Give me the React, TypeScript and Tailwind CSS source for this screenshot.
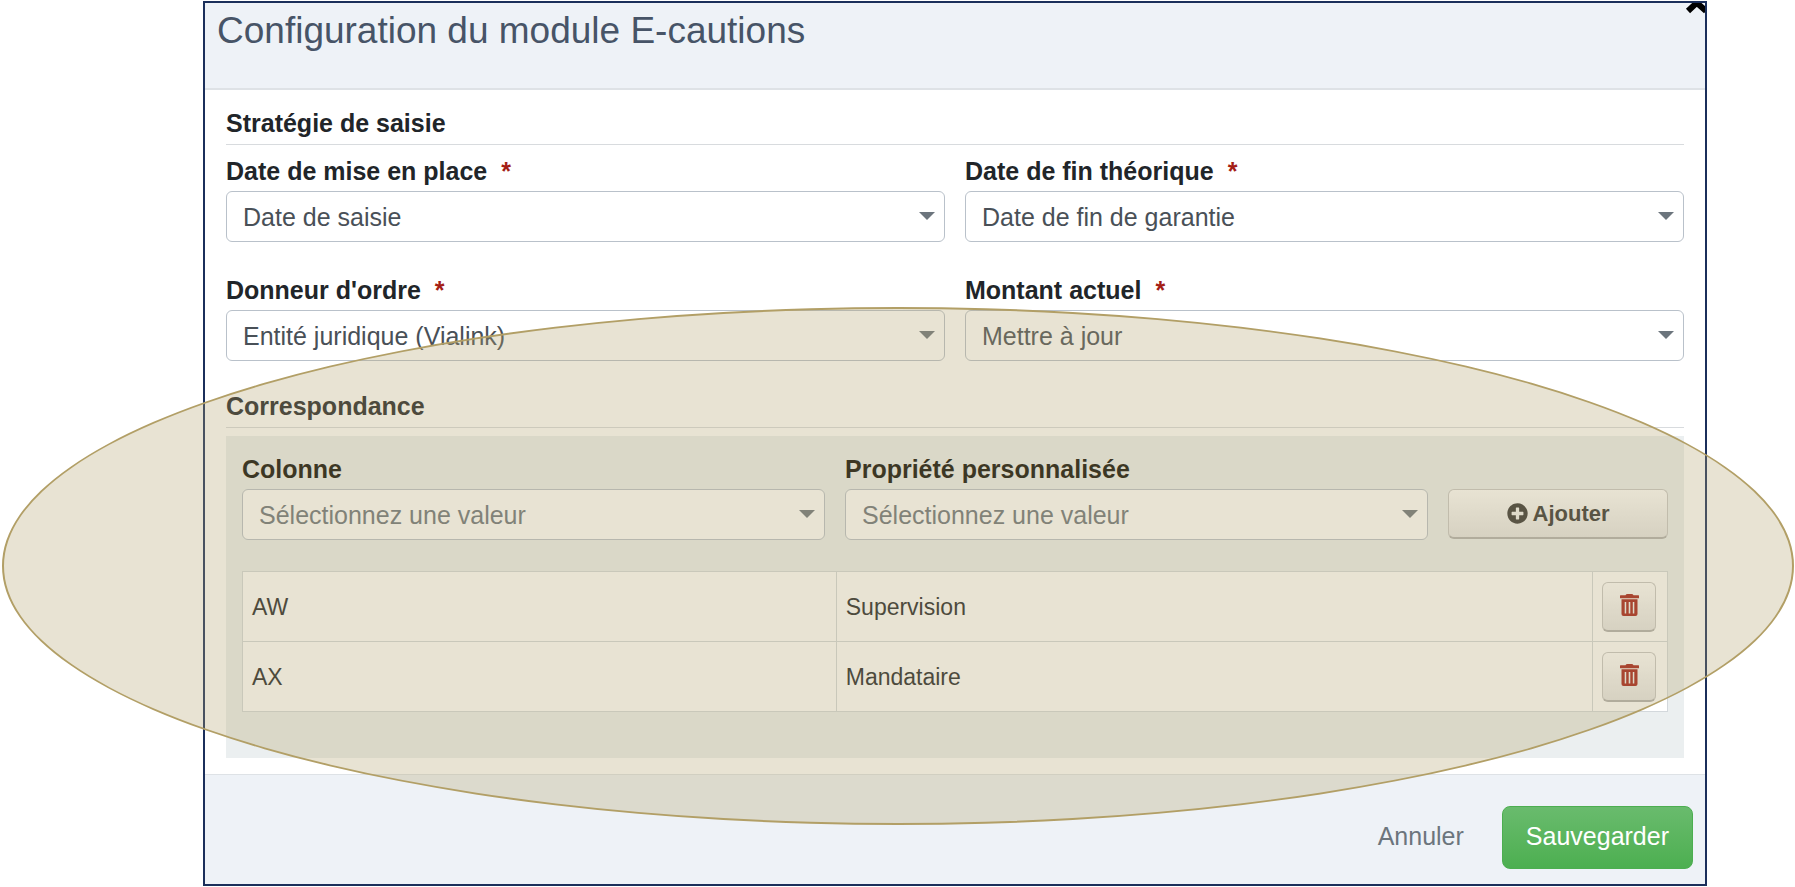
import { FaPlusCircle } from 'react-icons/fa';

interface SelectFieldProps {
  id: string;
  label: string;
  options: string[];
  required?: boolean;
  placeholder?: boolean;
}

function SelectField({ id, label, options, required = false, placeholder = false }: SelectFieldProps) {
  return (
    <div className="flex flex-col gap-1.5 min-w-0">
      <label
        htmlFor={id}
        className={`font-bold text-[25px] leading-7 ${placeholder ? 'text-[#0a0a05]' : 'text-[#212529]'}`}
      >
        {label}
        {required && <span className="ml-3.5 text-[#a41e16]">*</span>}
      </label>
      <div className="relative">
        <select
          id={id}
          className={`block w-full h-[51px] appearance-none rounded-md border border-[#b9c1ca] bg-white pt-px pl-4 pr-10 text-[25px] leading-7 ${
            placeholder ? 'text-[#6c757d]' : 'text-[#495057]'
          }`}
        >
          {options.map((option) => (
            <option key={option}>{option}</option>
          ))}
        </select>
        <svg
          className="absolute right-[10px] top-[21px] h-2 w-4 pointer-events-none"
          viewBox="0 0 16 8"
          fill="#6c757d"
        >
          <path d="M0 0h16L8 8z" />
        </svg>
      </div>
    </div>
  );
}

function SectionTitle({ children }: { children: string }) {
  return (
    <h2 className="border-b border-[#d8dbde] pb-[7px] text-[25px] leading-7 font-bold text-[#212529]">
      {children}
    </h2>
  );
}

function TrashIcon() {
  return (
    <svg className="h-[22px] w-[19px]" viewBox="0 0 19 22" fill="#a41e16">
      <path d="M5.500 1.200Q6 0 7.500 0h4Q13 0 13.500 1.200h5q.5 0 .5.5V4.200H0V1.700q0-.5.5-.5z" />
      <path
        fillRule="evenodd"
        d="M1.500 5.300h16V20q0 2-2 2h-12q-2 0-2-2zM4.700 8v11.500h1.500V8zM8.700 8v11.500h1.600V8zM12.800 8v11.500h1.500V8z"
      />
    </svg>
  );
}

const rows = [
  { column: 'AW', property: 'Supervision' },
  { column: 'AX', property: 'Mandataire' },
];

export default function App() {
  return (
    <div className="relative overflow-hidden bg-white pt-px pb-px font-['Liberation_Sans',Arial,sans-serif]">
      <main className="ml-[203px] mr-[88px] border-2 border-[#1b2f5b] bg-white">
        <header className="relative flex items-start overflow-hidden border-b-2 border-[#dee2e6] bg-[#eef2f7] px-3 pt-1.5 pb-[35px]">
          <h1 className="text-[37px] leading-[44px] text-[#475467]">Configuration du module E-cautions</h1>
          <button type="button" aria-label="Fermer" className="absolute -right-1 -top-[11px] h-6 w-6">
            <svg className="h-6 w-6" viewBox="0 0 24 24" fill="none" stroke="#000" strokeWidth="6">
              <path d="M3 3l18 16M20 3L3 19" />
            </svg>
          </button>
        </header>

        <section className="px-[21px] pt-[19px] pb-4">
          <SectionTitle>Stratégie de saisie</SectionTitle>
          <div className="mt-3 grid grid-cols-2 gap-x-5 gap-y-[34px]">
            <SelectField id="start" label="Date de mise en place" options={['Date de saisie']} required />
            <SelectField id="end" label="Date de fin théorique" options={['Date de fin de garantie']} required />
            <SelectField id="principal" label="Donneur d'ordre" options={['Entité juridique (Vialink)']} required />
            <SelectField id="amount" label="Montant actuel" options={['Mettre à jour']} required />
          </div>

          <div className="mt-[31px]">
            <SectionTitle>Correspondance</SectionTitle>
          </div>
          <div className="mt-2 bg-[#ebeff0] px-4 pt-[19px] pb-[46px]">
            <div className="grid grid-cols-[1fr_1fr_220px] items-end gap-5">
              <SelectField id="column" label="Colonne" options={['Sélectionnez une valeur']} placeholder />
              <SelectField
                id="property"
                label="Propriété personnalisée"
                options={['Sélectionnez une valeur']}
                placeholder
              />
              <button
                type="button"
                className="mb-px flex h-[50px] items-center justify-center gap-[5px] rounded-md border border-b-2 border-[#c8c8c8] border-b-[#b0b0b0] bg-linear-to-b from-white to-[#e6e6e6] text-[22px] leading-6 font-bold text-[#333]"
              >
                <FaPlusCircle className="h-[21px] w-[21px]" />
                Ajouter
              </button>
            </div>

            <table className="mt-[31px] w-full border-collapse bg-white text-[23px] leading-7 text-[#212529]">
              <tbody>
                {rows.map((row) => (
                  <tr key={row.column} className="h-[70px]">
                    <td className="w-5/12 border border-[#d3d8dc] px-[9px]">{row.column}</td>
                    <td className="border border-[#d3d8dc] px-[9px]">{row.property}</td>
                    <td className="w-[75px] border border-[#d3d8dc] px-[9px]">
                      <button
                        type="button"
                        aria-label="Supprimer"
                        className="flex h-[50px] w-[54px] items-center justify-center rounded-md border border-b-2 border-[#c8c8c8] border-b-[#b0b0b0] bg-linear-to-b from-white to-[#e6e6e6] pb-0.5"
                      >
                        <TrashIcon />
                      </button>
                    </td>
                  </tr>
                ))}
              </tbody>
            </table>
          </div>
        </section>

        <footer className="flex items-center justify-end gap-3 border-t border-[#dee2e6] bg-[#eef2f7] px-3 pt-[31px] pb-[15px] text-[25px] leading-7">
          <button type="button" className="px-[26px] pb-1 text-[#6c757d]">
            Annuler
          </button>
          <button
            type="button"
            className="h-[63px] rounded-lg border border-[#4cae50] bg-linear-to-b from-[#69bb6d] to-[#4caf50] px-[23px] pb-1 text-white"
          >
            Sauvegarder
          </button>
        </footer>
      </main>

      {/* Highlight over the mapping section */}
      <div className="pointer-events-none absolute top-[307px] right-px left-0.5 h-[518px] rounded-[50%] border-2 border-[#b29f66] bg-[#b2a26c]/30" />
    </div>
  );
}
